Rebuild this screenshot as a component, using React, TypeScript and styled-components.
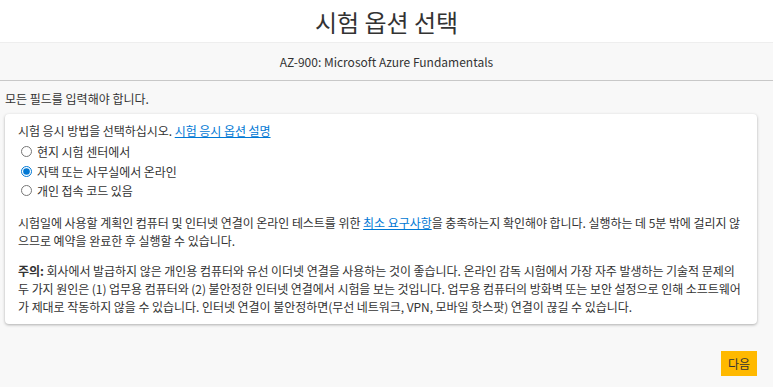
import styled, { createGlobalStyle } from "styled-components";

const GlobalStyle = createGlobalStyle`
  body {
    margin: 0;
    background: #f8f8f8;
    color: #333;
    font-family: "Segoe UI", "Noto Sans CJK KR", "Noto Sans", sans-serif;
    font-size: 12px;
  }
`;

const options = [
  { id: "center", label: "현지 시험 센터에서" },
  { id: "online", label: "자택 또는 사무실에서 온라인" },
  { id: "code", label: "개인 접속 코드 있음" },
];

export default function App() {
  return (
    <>
      <GlobalStyle />
      <Header>
        <Title>시험 옵션 선택</Title>
      </Header>
      <ExamBar>AZ-900: Microsoft Azure Fundamentals</ExamBar>
      <Notice>모든 필드를 입력해야 합니다.</Notice>
      <Card>
        <Line>
          시험 응시 방법을 선택하십시오. <Link href="#">시험 응시 옵션 설명</Link>
        </Line>
        <RadioList>
          {options.map((o) => (
            <RadioRow key={o.id}>
              <Radio
                type="radio"
                name="delivery"
                defaultChecked={o.id === "online"}
              />
              {o.label}
            </RadioRow>
          ))}
        </RadioList>
        <Paragraph>
          시험일에 사용할 계획인 컴퓨터 및 인터넷 연결이 온라인 테스트를 위한{" "}
          <Link href="#">최소 요구사항</Link>을 충족하는지 확인해야 합니다.
          실행하는 데 5분 밖에 걸리지 않으므로 예약을 완료한 후 실행할 수
          있습니다.
        </Paragraph>
        <Paragraph>
          <strong>주의:</strong> 회사에서 발급하지 않은 개인용 컴퓨터와 유선
          이더넷 연결을 사용하는 것이 좋습니다. 온라인 감독 시험에서 가장 자주
          발생하는 기술적 문제의 두 가지 원인은 (1) 업무용 컴퓨터와 (2)
          불안정한 인터넷 연결에서 시험을 보는 것입니다. 업무용 컴퓨터의 방화벽
          또는 보안 설정으로 인해 소프트웨어가 제대로 작동하지 않을 수
          있습니다. 인터넷 연결이 불안정하면(무선 네트워크, VPN, 모바일 핫스팟)
          연결이 끊길 수 있습니다.
        </Paragraph>
      </Card>
      <Footer>
        <NextButton type="button">다음</NextButton>
      </Footer>
    </>
  );
}

const Header = styled.header`
  background: #fff;
  height: 42px;
  display: flex;
  align-items: center;
  justify-content: center;
`;

const Title = styled.h1`
  margin: 0;
  font-size: 24px;
  font-weight: 400;
  color: #333;
`;

const ExamBar = styled.div`
  height: 37px;
  line-height: 37px;
  text-align: center;
  background: #f8f8f8;
  border-top: 1px solid #eee;
  border-bottom: 1px solid #c8c8c8;
  font-size: 12px;
`;

const Notice = styled.p`
  margin: 9px 5px 0;
  line-height: 18px;
`;

const Card = styled.section`
  margin: 6px 16px 0 5px;
  padding: 8px 12px 8px 13px;
  background: #fff;
  border-radius: 4px;
  box-shadow: 0 1px 3px rgba(0, 0, 0, 0.3);
  letter-spacing: -0.05px;
`;

const Line = styled.div`
  line-height: 18px;
`;

const Link = styled.a`
  color: #0078d4;
  text-decoration: underline;
`;

const RadioList = styled.div`
  margin-top: 2px;
  display: flex;
  flex-direction: column;
`;

const RadioRow = styled.label`
  display: flex;
  align-items: center;
  height: 19.5px;
`;

const Radio = styled.input`
  width: 11px;
  height: 11px;
  margin: 0 5px 0 3px;
  accent-color: #0078d4;
`;

const Paragraph = styled.p`
  margin: 13px 0 0;
  line-height: 18px;

  & + & {
    margin-top: 12px;
  }

  strong {
    font-weight: 700;
  }
`;

const Footer = styled.div`
  display: flex;
  justify-content: flex-end;
  margin: 27px 16px 0 0;
`;

const NextButton = styled.button`
  height: 25px;
  padding: 0 7px;
  border: none;
  border-radius: 0;
  background: #ffb900;
  color: #333;
  font-family: inherit;
  font-size: 12px;
  cursor: pointer;
`;
